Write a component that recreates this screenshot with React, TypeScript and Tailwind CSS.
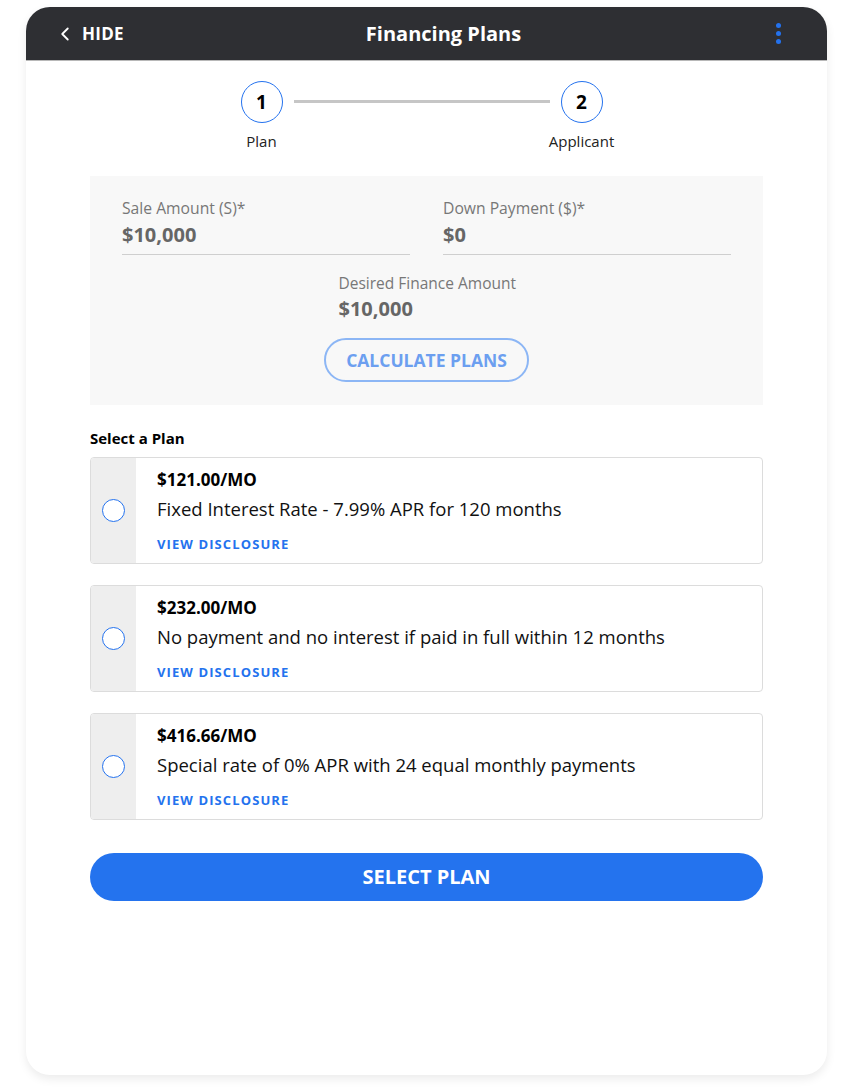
import { ChevronLeft } from "lucide-react";

const plans = [
  { price: "$121.00/MO", desc: "Fixed Interest Rate - 7.99% APR for 120 months" },
  { price: "$232.00/MO", desc: "No payment and no interest if paid in full within 12 months" },
  { price: "$416.66/MO", desc: "Special rate of 0% APR with 24 equal monthly payments" },
];

function Step({ n, label }: { n: number; label: string }) {
  return (
    <div className="flex w-[42px] flex-col items-center">
      <div className="flex h-[42px] w-[42px] items-center justify-center rounded-full border-[1.5px] border-[#2472ee] text-[19px] font-bold text-black">
        {n}
      </div>
      <div className="mt-[11px] whitespace-nowrap text-[15px] leading-none text-[#222]">{label}</div>
    </div>
  );
}

function Field({ label, value }: { label: string; value: string }) {
  return (
    <div className="flex-1 border-b border-[#cfcfcf] pb-[9px]">
      <div className="text-[15.7px] leading-none text-[#777]">{label}</div>
      <div className="mt-[8px] text-[20px] font-bold leading-none text-[#666]">{value}</div>
    </div>
  );
}

export default function App() {
  return (
    <div className="min-h-screen bg-white pl-[26px] pr-[28px] pt-[7px] pb-[13px]" style={{ fontFamily: "'Open Sans', 'Noto Sans', sans-serif" }}>
      <div className="flex h-[1068px] flex-col overflow-hidden rounded-[24px] bg-white shadow-[0_4px_10px_rgba(0,0,0,0.08)]">
        <header className="relative flex h-[54px] shrink-0 items-center justify-center border-b border-[#b8b8b8] bg-[#2e2f33]">
          <div className="absolute left-[28px] top-0 flex h-full items-center gap-[6px] text-white">
            <ChevronLeft size={22} strokeWidth={2} />
            <span className="text-[17px] font-bold tracking-[0.3px]">HIDE</span>
          </div>
          <h1 className="ml-[34px] text-[20px] font-bold text-white">Financing Plans</h1>
          <div className="absolute right-[46px] top-0 flex h-full flex-col items-center justify-center gap-[3px]">
            <span className="h-[5px] w-[5px] rounded-full bg-[#2472ee]" />
            <span className="h-[5px] w-[5px] rounded-full bg-[#2472ee]" />
            <span className="h-[5px] w-[5px] rounded-full bg-[#2472ee]" />
          </div>
        </header>

        <div className="flex flex-col px-[64px]">
          <div className="mt-[20px] flex items-start justify-center pr-[10px]">
            <Step n={1} label="Plan" />
            <div className="mx-[11px] mt-[19px] h-[3px] w-[256px] bg-[#c6c6c6]" />
            <Step n={2} label="Applicant" />
          </div>

          <div className="mt-[27px] flex flex-col items-center bg-[#f8f8f8] px-[32px] pt-[25px] pb-[23px]">
            <div className="flex w-full gap-[33px]">
              <Field label="Sale Amount (S)*" value="$10,000" />
              <Field label="Down Payment ($)*" value="$0" />
            </div>
            <div className="mt-[21px] w-[176px]">
              <div className="whitespace-nowrap text-[15.5px] leading-none text-[#777]">Desired Finance Amount</div>
              <div className="mt-[8px] text-[20px] font-bold leading-none text-[#666]">$10,000</div>
            </div>
            <button className="mt-[19px] h-[44px] rounded-full border-2 border-[#8cb6f5] px-[20px] text-[17.5px] font-bold text-[#6c9ff0]">
              CALCULATE PLANS
            </button>
          </div>

          <div className="mt-[22px] text-[15px] font-bold text-black">Select a Plan</div>

          <div className="mt-[7px] flex flex-col gap-[21px]">
            {plans.map((p) => (
              <div key={p.price} className="flex h-[107px] overflow-hidden rounded-[4px] border border-[#dcdcdc]">
                <div className="flex w-[45px] shrink-0 items-center justify-center bg-[#eeeeee]">
                  <span className="h-[23px] w-[23px] rounded-full border-[1.5px] border-[#2472ee] bg-white" />
                </div>
                <div className="flex flex-col pl-[21px] pt-[12px]">
                  <div className="text-[17px] font-bold leading-[20px] text-black">{p.price}</div>
                  <div className="mt-[9px] text-[18.5px] leading-[20px] text-[#111]">{p.desc}</div>
                  <div className="mt-[19px] text-[13px] font-bold leading-none tracking-[1.1px] text-[#2472ee]">VIEW DISCLOSURE</div>
                </div>
              </div>
            ))}
          </div>

          <button className="mt-[33px] h-[48px] w-full rounded-full bg-[#2473ee] text-[20px] font-bold text-white">
            SELECT PLAN
          </button>
        </div>
      </div>
    </div>
  );
}
